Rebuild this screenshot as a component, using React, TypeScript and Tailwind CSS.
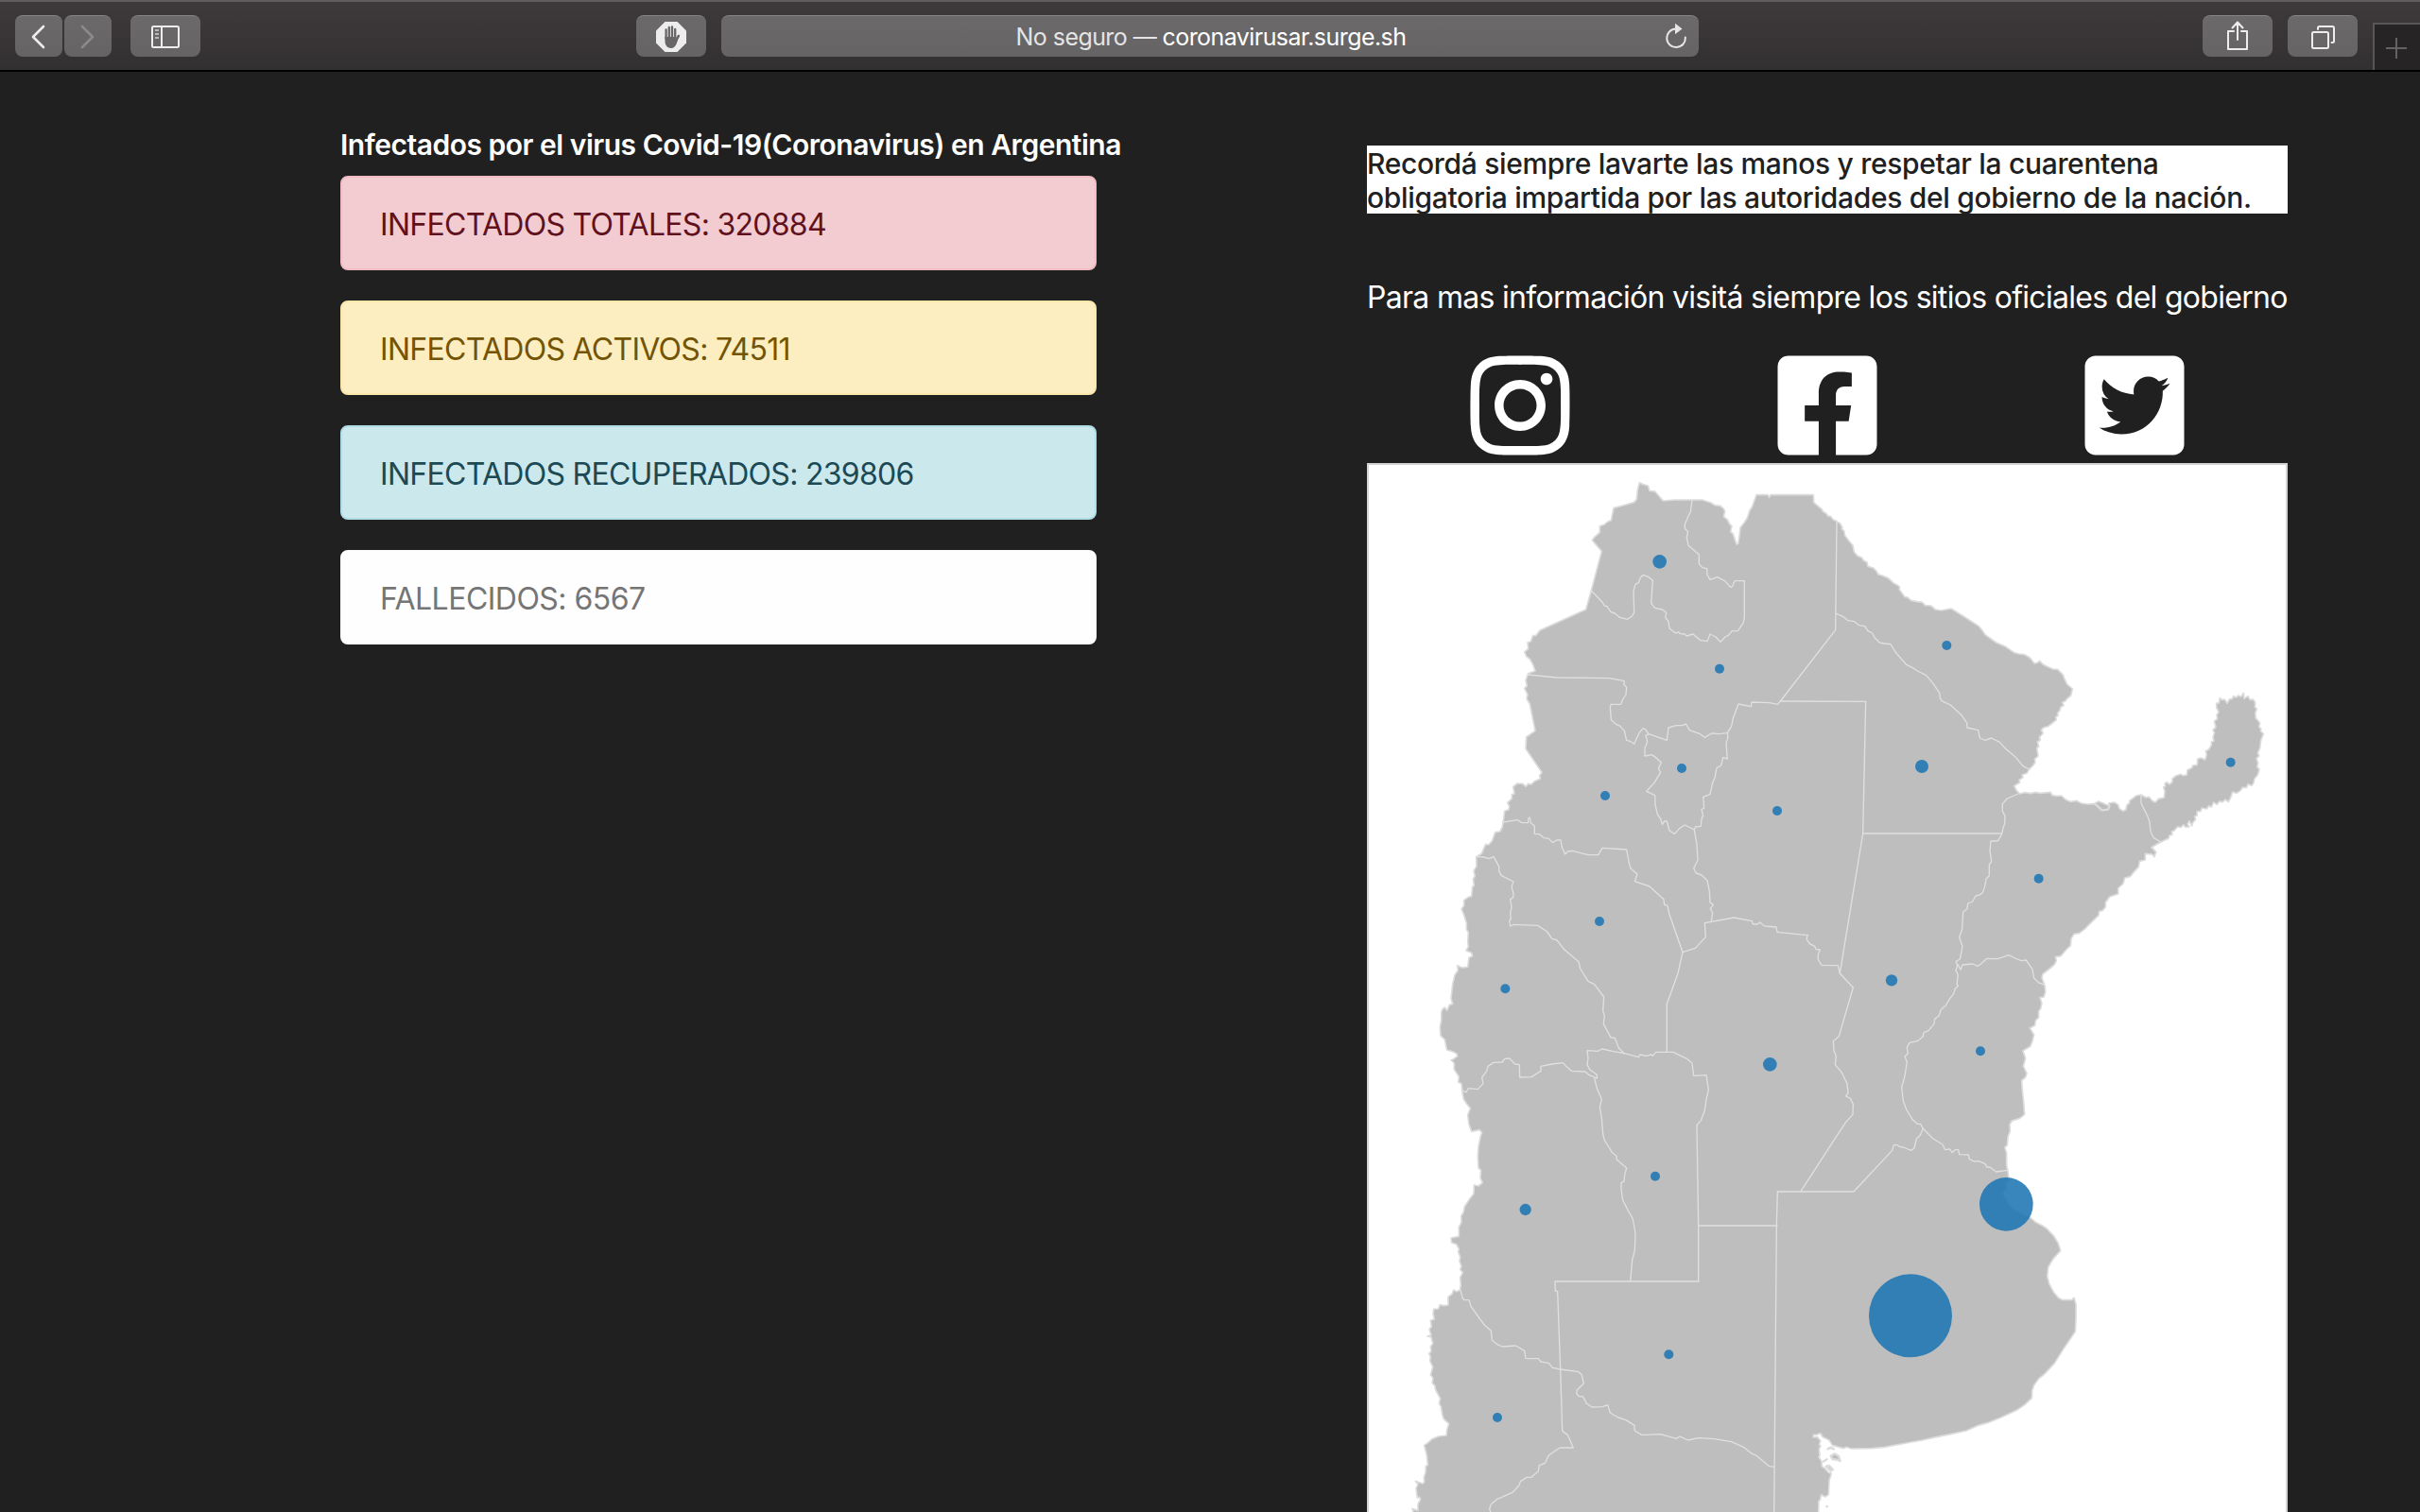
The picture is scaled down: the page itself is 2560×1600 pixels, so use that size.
import React from "react";
import { FaFacebookSquare, FaInstagram, FaTwitterSquare } from "react-icons/fa";

const FONT = "font-['Inter','Liberation_Sans',sans-serif]";

/* ---------- Map geometry ---------- */

// The map is charted in six sheets; every sheet has its own origin.
const SHEETS = {
  A: [132, 0],
  B: [1422, 0],
  C: [132, 1080],
  D: [1422, 1080],
  E: [132, 2130],
  F: [1422, 2130],
} as const;
type Sheet = keyof typeof SHEETS;
type Part = [Sheet, string];

function trace(parts: Part[]): string {
  return parts
    .map(([sheet, pts]) => {
      const [ox, oy] = SHEETS[sheet];
      return pts
        .trim()
        .split(/\s+/)
        .map((p) => {
          const [x, y] = p.split(",").map(Number);
          return `${x + ox},${y + oy}`;
        })
        .join(" ");
    })
    .join(" ");
}

const COAST: Part[] = [
  ["A", "733,62 745,68 760,72 765,88 782,90 795,105 808,120 845,117 932,117 960,126 972,134 990,136 1000,145 1004,153 1000,170 1012,180 1020,195 1026,200 1022,218 1030,225 1035,240 1041,258 1046,256 1050,232 1053,205 1065,190 1075,175 1083,150 1090,140 1104,101 1140,101 1145,109 1149,101 1285,101 1286,125 1300,137 1312,147 1315,154 1325,160 1331,168 1340,170 1348,180 1358,184"],
  ["B", "72,187 80,192 87,205 84,209 92,215 95,230 110,250 120,262 124,282 135,295 148,300 154,309 165,315 168,328 185,333 195,343 200,353 215,358 232,365 248,380 262,388 268,392 268,402 285,425 293,426 305,436 322,440 340,442 350,452 368,453 382,465 400,468 432,462 480,492 520,518 530,530 540,545 575,570 605,583 632,602 648,606 665,608 682,618 697,637 706,634 713,628 722,638 735,645 755,654 770,655 787,672 792,686 800,702 817,717 812,738 800,748 795,755 785,760 789,770 780,775 777,785 769,795 772,800 764,807 766,815 750,828 740,836 725,840 718,848 724,858 712,870 715,880 706,885 710,900 704,905 708,930 697,940 699,950 690,962 680,972 672,985 657,990 660,998 648,1006 650,1014 632,1025 640,1040 650,1050 665,1046 685,1049 700,1045 715,1048 748,1045 752,1054 765,1057 782,1056 795,1068 810,1075 830,1072 845,1080 865,1083 885,1082 900,1074 915,1080 935,1090 932,1080 950,1077 962,1085 966,1097 978,1105 987,1100 990,1085 998,1080 998,1072 1020,1056 1035,1053 1050,1062 1060,1060 1070,1072 1080,1077 1090,1066 1108,1062 1110,1042 1106,1028 1112,1026 1110,1018 1116,1013 1125,1020 1134,1012 1134,1002 1145,993 1160,988 1168,992 1180,990 1182,974 1195,968 1200,960 1213,958 1214,940 1224,936 1238,942 1243,926 1240,914 1250,909 1258,895 1258,885 1266,882 1263,870 1268,856 1263,848 1272,838 1267,820 1277,812 1275,800 1281,790 1274,776 1274,762 1282,762 1285,746 1292,752 1300,750 1308,763 1315,750 1324,748 1328,740 1336,744 1344,738 1352,742 1360,730 1362,748 1374,740 1381,752 1390,750 1397,760 1396,775 1402,780 1397,795 1399,810 1412,825 1409,838 1415,843 1415,852 1423,860 1415,880 1412,905 1405,920 1409,930 1401,938 1406,952 1403,965 1410,972 1405,990 1395,1002 1391,1018 1385,1024 1374,1019 1370,1030 1357,1030 1350,1040 1338,1048 1325,1044 1320,1060 1312,1076 1302,1068 1294,1076 1283,1074 1276,1084 1265,1077 1258,1092 1250,1088 1243,1098 1228,1095 1224,1105 1212,1106 1213,1118 1205,1122 1208,1132 1200,1140"],
  ["D", "1196,72 1188,56 1182,66 1188,74 1176,76 1170,68 1162,76 1150,75 1140,87 1132,90 1134,100 1125,102 1122,112 1108,118 1098,123 1085,130 1068,140 1082,155 1077,170 1070,162 1048,160 1048,180 1030,184 1027,202 1012,218 1000,233 983,237 978,255 962,270 962,288 950,292 935,297 922,315 922,330 912,341 902,343 900,356 885,370 870,385 855,400 838,413 822,415 813,430 811,452 797,465 780,485 763,488 766,500 760,512 745,525 722,543 720,555 730,580 731,600 726,615 714,617 720,635 716,652 710,660 710,680 700,690 698,705 682,714 695,735 690,755 683,772 660,786 668,810 661,835 672,857 668,870 656,880 657,900 662,950 665,988 650,1000 625,1008 618,1020 619,1040 612,1060 610,1085 602,1093 608,1110 608,1150 612,1168 615,1190"],
  ["F", "615,150 605,155 608,172 595,190 605,205 615,225 630,240 650,250 682,264 700,280 720,290 735,300 757,323 772,347 779,370 755,397 740,423 737,450 743,475 757,502 772,520 783,526 815,527 822,520 828,540 828,590 826,627 790,680 760,728 730,760 710,777 695,797 689,815 688,838 665,860 640,877 590,900 547,917 515,926 480,942 430,953 375,964 340,972 290,981 220,994 180,998 115,999 100,994 90,998 55,988 45,972 35,967 25,962 17,950 5,955 -5,955"],
  ["E", "1285,963 1298,962 1308,975 1303,985 1308,990 1303,1000 1305,1020 1302,1025 1311,1040 1312,1055 1322,1062 1333,1075 1342,1078 1335,1100 1333,1145 1322,1152 1310,1145 1306,1162 1302,1165 1300,1230 15,1230 15,1200 12,1190 30,1195 30,1175 38,1160 34,1152 28,1155 24,1125 30,1112 22,1102 45,1110 50,1105 49,1090 54,1075 55,1055 61,1050 58,1020 50,988 62,980 75,968 95,960 120,957 122,940 128,920 112,905 107,890 103,865 97,855 101,840 85,810 84,800 75,790 78,775 70,765 77,740 68,720 70,708 65,697 72,690 70,675 77,665 72,645 60,642 72,638 66,620 73,612 70,592 82,588 78,570 80,556 95,555 100,542 112,545 126,543 126,517 138,508 143,495 152,500 163,496 166,480 164,455 172,440 164,430 168,420 162,405 164,390 158,375 160,365 152,350 137,345 135,330 160,325 160,295 168,280 167,260 174,250 178,230 195,205 207,190 208,162 222,165 235,155"],
  ["C", "228,1190 230,1165 222,1158 220,1120 222,1090 228,1060 233,1045 225,1037 200,1042 192,1020 188,990 196,968 185,955 175,940 170,912 168,890 158,885 160,868 145,845 145,825 135,815 143,812 155,803 153,795 140,788 122,783 118,765 115,750 102,738 100,710 104,690 104,665 107,655 115,648 122,658 130,640 140,637 135,620 140,575 147,545 157,530 155,515 170,522 188,520 192,490 203,485 200,475 183,468 190,455 188,440 190,410 184,400 184,380 176,355 168,335 176,325 176,308 190,298 200,295 203,265 208,262 205,240 211,232 207,215 216,200 215,170 232,160 238,145 245,130 254,132 265,120 275,92 290,90 298,75 300,60"],
  ["A", "302,1130 305,1105 318,1100 320,1090 314,1078 328,1065 328,1052 336,1050 332,1028 345,1017 362,1018 373,1027 380,1018 390,1020 400,1010 418,1002 416,992 423,982 372,907 374,870 402,850 385,765 375,748 378,735 368,715 376,708 372,690 380,668 402,660 395,640 385,622 375,615 368,600 380,590 378,570 388,566 395,548 405,547 417,531 563,465 580,405 613,280 583,245 590,235 607,220 607,200 622,195 632,186 643,182 651,143 680,135 715,125 724,115 727,85"],
];

const BORDERS: Part[][] = [
  [["A", "900,117 895,155 887,170 877,195 877,208 887,218 883,235 888,262 922,290 922,320 932,332 947,335 948,355 957,370 980,362 1005,375 1022,394 1028,392 1035,374 1066,374 1066,490 1062,508 1045,533 1027,533 1015,547 1005,552 990,568 975,552 957,543 948,566 925,562 903,543 883,549 876,543 860,541 857,536 848,540 828,525 825,503 815,490 818,475 805,465 782,460 770,445 775,372 762,362 745,355 735,365 730,380 720,385 714,405 716,475 710,485 695,496 670,490 655,477 642,473 630,455 622,453 614,440 580,405"]],
  [["A", "380,672 470,681 637,683 685,692 683,703 692,712 690,735 680,750 674,766 642,766 640,775 643,815 660,830 672,835 685,850 692,880 705,884 716,892 733,855 745,842 752,846 762,860 820,880 825,840 850,833 870,833 880,828 892,848 925,860 940,871 962,858 985,860 1012,857 1025,835 1030,810 1047,765 1087,773 1089,759 1145,761 1172,766 1180,756 1355,530 1359,187"]],
  [["A", "1180,756"], ["B", "161,757"], ["D", "152,96 79,540"]],
  [["A", "762,860 753,865 758,885 750,905 750,930 772,926 785,935 802,950 793,970 800,982 780,1015 755,1042 782,1055 783,1085 790,1115 800,1130 805,1147 812,1137 820,1137 828,1167 845,1177 860,1160 877,1149 907,1164 910,1155 928,1153 930,1130 935,1120 930,1100 938,1095 935,1060 957,1052 965,1015 972,1000 978,968 992,960 998,935 1012,939 1008,890 1014,870 1012,857"]],
  [["C", "302,60 345,53 360,62 380,62 380,48 385,45 388,62 400,72 400,97 415,98 430,110 445,112 457,125 470,117 483,117 487,140 497,162 505,153 520,151 570,164 602,164 615,142 692,147 700,190 705,207 726,225 718,248 765,264 810,305 812,322 822,325 827,350 870,473 855,540 820,637 820,790"]],
  [["C", "218,170 240,171 255,176 270,170 287,200 287,215 295,230 333,249 327,265 333,285 333,298 323,305 327,330 323,350 325,368 320,372 323,390 335,385 410,388 440,408 455,430 470,434 495,465 540,503 545,525 570,565 590,575 620,615 617,660 622,675 619,700 642,744 655,745 667,777 685,794"]],
  [["C", "907,85 915,130 918,180 905,207 913,222 930,228 948,245 955,280 957,315 967,322 958,335 965,348 961,376"]],
  [["C", "870,473 910,460 943,425 940,380 1033,363 1090,374 1093,384 1108,384 1115,378 1130,390 1167,393 1170,409 1267,419 1263,430 1272,445 1290,455 1292,463 1306,465 1300,480 1300,497 1311,514 1363,515 1369,540 1411,585 1366,740 1348,755 1350,785 1357,803 1354,830 1375,855 1392,890 1395,920 1388,930 1402,937 1411,955 1410,988 1388,1012 1350,1070 1245,1232"]],
  [["C", "685,794 650,788 615,780 600,787 567,785 570,810 567,830 575,845 598,862 598,873 572,862 560,852 517,850 500,835 490,824 455,828 420,835 420,850 390,869 353,870 352,830 338,828 320,810 305,811 297,822 270,823 252,835 248,850 233,870 237,890 220,908 190,905 182,918 172,912"]],
  [["C", "685,794 730,806 735,798 755,802 770,798 775,802 785,790 840,790 885,812 900,825 905,865 945,863 952,910 945,940 940,975 928,1007 915,1022 920,1341 920,1518"]],
  [["C", "590,873 598,905 613,940 607,965 613,1000 617,1050 622,1070 640,1098 645,1108 660,1120 660,1130 692,1158"], ["E", "686,130 684,150 675,155 675,175 680,210 698,245 712,270 720,315 718,370 710,400 704,468"]],
  [["E", "920,468 465,468 466,498 473,500 482,747 488,943 505,955 523,996 480,996 445,1020 433,1045 415,1052 412,1070 390,1090 375,1090 355,1103 350,1117 330,1138 280,1160 262,1175 257,1190 265,1215"]],
  [["E", "920,291 1170,291"]],
  [["E", "1160,1215 1168,291 1171,183 1413,183"], ["F", "123,183 245,52 250,35 262,35 270,41 280,42 305,52 315,45 322,15 333,5 343,-17"]],
  [["E", "165,496 172,522 178,527 192,527 198,547 225,585 240,605 262,625 265,655 280,667 298,675 340,672 368,688 372,712 385,713 412,713 420,723 445,727 457,742 482,747 540,755 550,765 556,792 535,812 533,823 540,833 553,833 565,855 582,867 615,866 632,860 640,885 665,900 690,908 717,925 718,942 740,955 755,955 800,953 850,967 860,960 887,972 920,965 970,968 1025,977 1065,995 1090,1015 1103,1020 1145,1055 1159,1056"]],
  [["B", "68,478 90,488 105,500 125,503 140,515 158,518 168,533 182,540 190,555 205,570 220,573 240,575 255,600 290,640 310,650 325,660 352,673 375,700 395,730 397,745 402,755 430,768 465,800 482,825 483,840 518,848 523,873 540,880 560,873 587,887 605,907 635,932 660,962 680,972"]],
  [["B", "645,1050 610,1065 595,1082 595,1105 603,1120 602,1145 597,1158"], ["D", "592,100 580,120 558,120 555,150 560,185 553,195 553,230 543,240 540,260 533,282 525,290 510,294 500,312 485,318 483,335 470,345 467,400 458,425 468,455 460,495 447,503 452,515 447,530 454,545 450,575 455,580 445,588 440,605 428,620 415,642 400,655 393,675 380,685 378,700 360,722 345,728 343,740 325,755 300,760 292,775 295,795 285,803 292,822 285,865 280,885 275,900 280,945 290,972 310,1005 325,1018 335,1018 343,1033 375,1065 405,1083 413,1100 428,1098 435,1109 445,1100 455,1100 458,1115 487,1116 490,1130 505,1137 520,1136 540,1145 545,1155 555,1155 575,1170 612,1165"]],
  [["D", "152,96 592,96"]],
  [["D", "454,512 462,529 468,513 500,510 517,517 530,507 545,493 580,494 615,482 635,492 655,500 670,498 690,527 695,555 710,570 725,575 730,582"]],
  [["B", "1035,1053 1035,1080 1055,1120 1062,1140 1065,1170 1075,1190 1098,1203"]],
];

const ISLANDS: Part[][] = [
  [["B", "888,1082 900,1092 910,1102 930,1100 934,1090"]],
  [["E", "1340,1022 1352,1015 1365,1022 1370,1038 1358,1034 1345,1032 1340,1022"]],
  [["E", "1325,1055 1335,1053 1347,1065 1340,1070 1325,1055"]],
  [["E", "1330,1000 1340,995 1350,1000"]],
  [["E", "1316,1040 1328,1033"]],
  [["E", "1327,1182 1329,1183"]],
];

const CASES: [Sheet, number, number, number][] = [
  ["A", 797, 313, 22],
  ["A", 987, 653, 15],
  ["A", 867, 969, 15],
  ["A", 624, 1056, 15],
  ["A", 1170, 1104, 15],
  ["B", 418, 579, 15],
  ["B", 339, 963, 21],
  ["B", 1319, 950, 15],
  ["C", 606, 375, 15],
  ["C", 307, 589, 15],
  ["C", 1147, 829, 22],
  ["D", 710, 239, 15],
  ["D", 243, 562, 18.5],
  ["D", 525, 787, 15],
  ["E", 783, 134, 15],
  ["E", 371, 240, 18.5],
  ["E", 826, 700, 15],
  ["E", 282, 900, 15],
  ["F", 607, 223, 85],
  ["F", 303, 577, 132],
];

function ArgentinaMap() {
  return (
    <svg
      width="970"
      height="1110"
      viewBox="6 6 2910 3330"
      className="block"
      strokeLinejoin="round"
      strokeLinecap="round"
    >
      <polygon points={trace(COAST)} fill="#bebebe" stroke="#dcdcdc" strokeWidth="5" />
      <g fill="none" stroke="#e0e0e0" strokeWidth="4">
        {BORDERS.map((b, i) => (
          <polyline key={i} points={trace(b)} />
        ))}
      </g>
      <g fill="#bebebe" stroke="#dcdcdc" strokeWidth="7">
        {ISLANDS.map((b, i) => (
          <polyline key={i} points={trace(b)} />
        ))}
      </g>
      <g fill="#1f77b4" fillOpacity="0.89">
        {CASES.map(([s, x, y, r], i) => (
          <circle key={i} cx={x + SHEETS[s][0]} cy={y + SHEETS[s][1]} r={r} />
        ))}
      </g>
    </svg>
  );
}

/* ---------- Browser toolbar ---------- */

function ToolButton({ className, children }: { className: string; children: React.ReactNode }) {
  return (
    <div
      className={`flex h-11 shrink-0 items-center justify-center rounded-lg border-t border-[#858384] bg-linear-to-b from-[#6b696a] to-[#656364] ${className}`}
    >
      {children}
    </div>
  );
}

function Toolbar() {
  return (
    <header className="flex h-[76px] items-start border-t-2 border-b-2 border-t-[#5f5d5e] border-b-black bg-linear-to-b from-[#3e3a3b] to-[#333031] pt-3.5 pl-4">
      <ToolButton className="w-[50px] pr-0.5">
        <svg width="18" height="28" viewBox="0 0 18 28" fill="none" stroke="#ededed" strokeWidth="2.6" strokeLinecap="round" strokeLinejoin="round">
          <path d="M15 3 4 14 15 25" />
        </svg>
      </ToolButton>
      <ToolButton className="ml-0.5 w-[50px]">
        <svg width="18" height="28" viewBox="0 0 18 28" fill="none" stroke="#8c8a8b" strokeWidth="2.6" strokeLinecap="round" strokeLinejoin="round">
          <path d="M3 3 14 14 3 25" />
        </svg>
      </ToolButton>
      <ToolButton className="ml-5 w-[74px]">
        <svg width="30" height="24" viewBox="0 0 30 24" fill="none" stroke="#ededed" strokeWidth="2">
          <rect x="1" y="1" width="28" height="22" rx="1.5" />
          <path d="M11 1v22" />
          <path d="M4 5h4M4 9h4M4 13h4" stroke="#b9b8b8" />
        </svg>
      </ToolButton>
      <ToolButton className="ml-[461px] w-[74px]">
        <svg width="32" height="32" viewBox="0 0 32 32">
          <path d="M9.5 0h13L32 9.5v13L22.500 32h-13L0 22.500v-13z" fill="#ededed" />
          <g stroke="#686667" strokeWidth="2.300" strokeLinecap="round" fill="none">
            <path d="M10.600 18V8.500M13.800 17V6M17 17V5.500M20.200 17V8" />
            <path d="M21 20.500 23.800 15" strokeWidth="2.600" />
          </g>
          <path d="M9.450 16h11.900v4l1.800-2.500c-.8 4.500-2.300 10.500-7.150 10.500-4.800 0-6.550-4-6.550-8z" fill="#686667" />
        </svg>
      </ToolButton>
      <div className="ml-4 flex h-11 w-[1034px] shrink-0 items-center rounded-lg border-t border-[#858384] bg-linear-to-b from-[#6b696a] to-[#656364] pr-3">
        <div className="w-[38px]" />
        <div className="flex-1 pt-0.5 text-center text-[25px] tracking-[-0.57px] whitespace-pre text-[#e4e4e4]">
          No seguro — <span className="text-white">coronavirusar.surge.sh</span>
        </div>
        <svg width="24" height="28" viewBox="0 0 24 28" fill="none" stroke="#e6e6e6" strokeWidth="2" className="-mt-0.5">
          <path d="M12 6.500A9.800 9.800 0 1 0 21.800 15.500" strokeLinecap="round" />
          <path d="M11 .8v11.400L18.500 6.500z" fill="#e6e6e6" stroke="none" />
        </svg>
      </div>
      <ToolButton className="ml-[533px] w-[74px]">
        <svg width="24" height="32" viewBox="0 0 24 32" fill="none" stroke="#ededed" strokeWidth="2" strokeLinecap="round" strokeLinejoin="round" className="-mt-1">
          <path d="M8 12H2v19h20V12h-6M12 21V3M6.500 8.500 12 2.500l5.500 6" />
        </svg>
      </ToolButton>
      <ToolButton className="ml-4 w-[74px]">
        <svg width="26" height="26" viewBox="0 0 26 26" fill="none" stroke="#ededed" strokeWidth="2" strokeLinejoin="round" strokeLinecap="round">
          <rect x="2" y="8" width="17" height="17" rx="1.500" />
          <path d="M8 5V3.500Q8 2 9.500 2H23.500Q25 2 25 3.500V17.500Q25 19 23.500 19H22.500" />
        </svg>
      </ToolButton>
      <div className="mt-2 ml-4 flex h-[50px] flex-1 items-center justify-center border-t-2 border-l-2 border-[#585657] bg-[#272425] pr-0.5">
        <svg width="22" height="22" viewBox="0 0 22 22" stroke="#646263" strokeWidth="2" className="mt-0.5">
          <path d="M11 0v22M0 11h22" />
        </svg>
      </div>
    </header>
  );
}

/* ---------- Page ---------- */

const STATS = [
  { text: "INFECTADOS TOTALES: 320884", style: "border-[#efbcc3] bg-[#f3ccd1] text-[#5f121d]", spacing: "tracking-[-0.71px]" },
  { text: "INFECTADOS ACTIVOS: 74511", style: "border-[#fae8ab] bg-[#fceec0] text-[#735405]", spacing: "tracking-[-0.71px]" },
  { text: "INFECTADOS RECUPERADOS: 239806", style: "border-[#b0dde5] bg-[#cbe8ed] text-[#1b4954]", spacing: "tracking-[-0.71px]" },
  { text: "FALLECIDOS: 6567", style: "border-[#fdfdfe] bg-[#fefefe] text-[#757575]", spacing: "tracking-[-0.52px]" },
];

export default function App() {
  return (
    <div className={`flex h-[1600px] w-[2560px] flex-col overflow-hidden bg-[#202020] text-white ${FONT}`}>
      <Toolbar />
      <main className="flex min-h-0 flex-1 items-start pl-[360px]">
        <section className="mt-[59px] w-[800px] shrink-0">
          <h1 className="mb-[15px] text-[30px] leading-9 font-semibold tracking-[-0.48px] whitespace-nowrap">
            Infectados por el virus Covid-19(Coronavirus) en Argentina
          </h1>
          <div className="flex flex-col gap-8">
            {STATS.map((s) => (
              <div key={s.text} className={`flex h-[100px] items-center rounded-lg border-2 px-10 pt-[3px] text-[32px] whitespace-nowrap ${s.style}`}>
                <span className={s.spacing}>{s.text}</span>
              </div>
            ))}
          </div>
        </section>
        <section className="mt-[78px] ml-[286px] w-[974px] shrink-0">
          <p className="h-[72px] bg-white pt-px text-[30px] leading-9 font-medium tracking-[-0.32px] whitespace-nowrap text-[#202020]">
            Recordá siempre lavarte las manos y respetar la cuarentena
            <br />
            obligatoria impartida por las autoridades del gobierno de la nación.
          </p>
          <p className="mt-[65px] text-[32px] leading-[48px] tracking-[-0.7px] whitespace-nowrap">
            Para mas información visitá siempre los sitios oficiales del gobierno
          </p>
          <div className="mt-[30px] grid grid-cols-3 justify-items-center text-[120px]">
            <FaInstagram />
            <FaFacebookSquare />
            <FaTwitterSquare />
          </div>
          <div className="mt-px border-2 border-[#d3d3d3] bg-white">
            <ArgentinaMap />
          </div>
        </section>
      </main>
    </div>
  );
}
